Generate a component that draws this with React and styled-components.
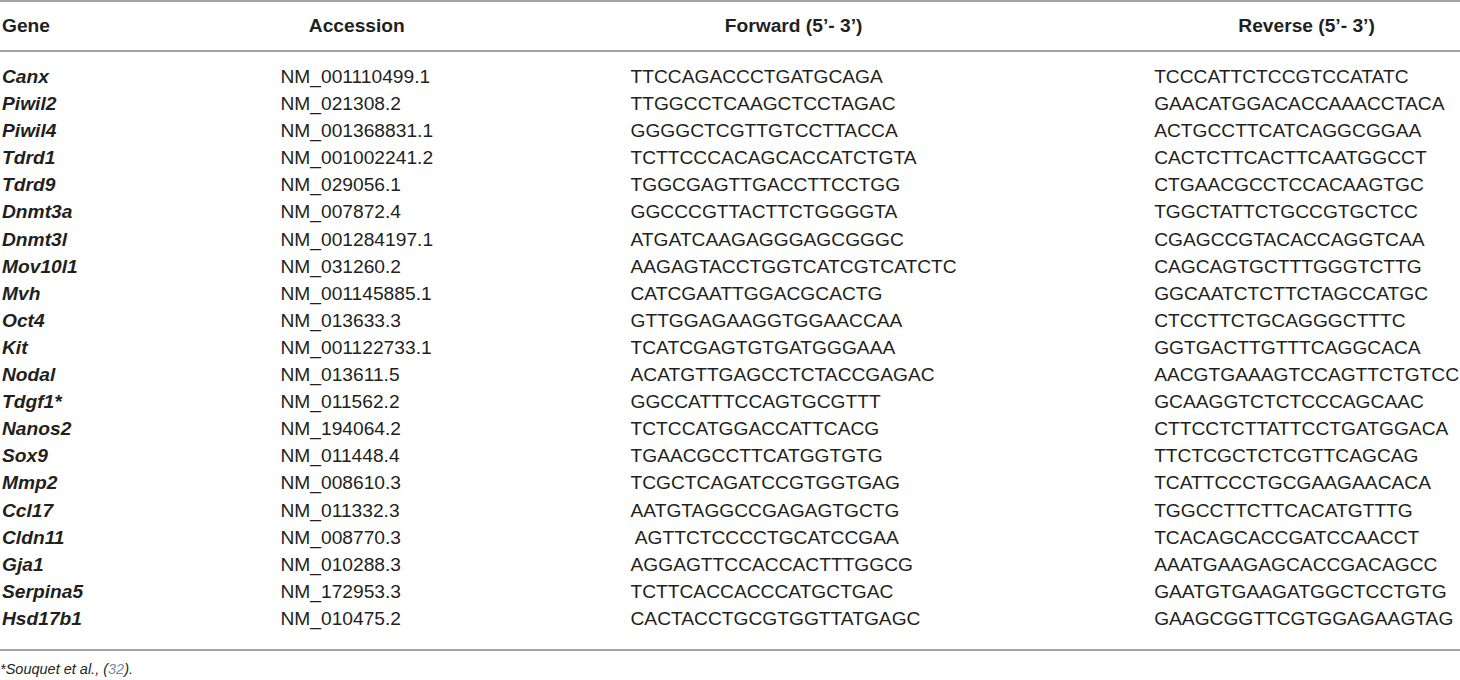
import React from "react";
import styled, { createGlobalStyle } from "styled-components";

const rows = [
  ["Canx", "NM_001110499.1", "TTCCAGACCCTGATGCAGA", "TCCCATTCTCCGTCCATATC"],
  ["Piwil2", "NM_021308.2", "TTGGCCTCAAGCTCCTAGAC", "GAACATGGACACCAAACCTACA"],
  ["Piwil4", "NM_001368831.1", "GGGGCTCGTTGTCCTTACCA", "ACTGCCTTCATCAGGCGGAA"],
  ["Tdrd1", "NM_001002241.2", "TCTTCCCACAGCACCATCTGTA", "CACTCTTCACTTCAATGGCCT"],
  ["Tdrd9", "NM_029056.1", "TGGCGAGTTGACCTTCCTGG", "CTGAACGCCTCCACAAGTGC"],
  ["Dnmt3a", "NM_007872.4", "GGCCCGTTACTTCTGGGGTA", "TGGCTATTCTGCCGTGCTCC"],
  ["Dnmt3l", "NM_001284197.1", "ATGATCAAGAGGGAGCGGGC", "CGAGCCGTACACCAGGTCAA"],
  ["Mov10l1", "NM_031260.2", "AAGAGTACCTGGTCATCGTCATCTC", "CAGCAGTGCTTTGGGTCTTG"],
  ["Mvh", "NM_001145885.1", "CATCGAATTGGACGCACTG", "GGCAATCTCTTCTAGCCATGC"],
  ["Oct4", "NM_013633.3", "GTTGGAGAAGGTGGAACCAA", "CTCCTTCTGCAGGGCTTTC"],
  ["Kit", "NM_001122733.1", "TCATCGAGTGTGATGGGAAA", "GGTGACTTGTTTCAGGCACA"],
  ["Nodal", "NM_013611.5", "ACATGTTGAGCCTCTACCGAGAC", "AACGTGAAAGTCCAGTTCTGTCC"],
  ["Tdgf1*", "NM_011562.2", "GGCCATTTCCAGTGCGTTT", "GCAAGGTCTCTCCCAGCAAC"],
  ["Nanos2", "NM_194064.2", "TCTCCATGGACCATTCACG", "CTTCCTCTTATTCCTGATGGACA"],
  ["Sox9", "NM_011448.4", "TGAACGCCTTCATGGTGTG", "TTCTCGCTCTCGTTCAGCAG"],
  ["Mmp2", "NM_008610.3", "TCGCTCAGATCCGTGGTGAG", "TCATTCCCTGCGAAGAACACA"],
  ["Ccl17", "NM_011332.3", "AATGTAGGCCGAGAGTGCTG", "TGGCCTTCTTCACATGTTTG"],
  ["Cldn11", "NM_008770.3", " AGTTCTCCCCTGCATCCGAA", "TCACAGCACCGATCCAACCT"],
  ["Gja1", "NM_010288.3", "AGGAGTTCCACCACTTTGGCG", "AAATGAAGAGCACCGACAGCC"],
  ["Serpina5", "NM_172953.3", "TCTTCACCACCCATGCTGAC", "GAATGTGAAGATGGCTCCTGTG"],
  ["Hsd17b1", "NM_010475.2", "CACTACCTGCGTGGTTATGAGC", "GAAGCGGTTCGTGGAGAAGTAG"],
];

const GlobalStyle = createGlobalStyle`
  html, body {
    margin: 0;
    padding: 0;
    background: #ffffff;
  }
  body {
    font-family: "Liberation Sans", Arial, sans-serif;
    color: #231f20;
  }
`;

const Page = styled.div`
  width: 1460px;
`;

const Table = styled.div`
  display: grid;
  grid-template-columns: repeat(4, max-content);
  justify-content: space-between;
  padding-left: 2px;
  padding-right: 1px;
  border-top: 2px solid #a3a3a3;
  border-bottom: 2px solid #a3a3a3;
  font-size: 19.2px;
`;

const HeadCell = styled.div`
  height: 48px;
  line-height: 48px;
  font-weight: bold;
  text-align: ${({ $left }) => ($left ? "left" : "center")};
`;

const Rule = styled.div`
  grid-column: 1 / -1;
  height: 2px;
  margin-left: -2px;
  margin-right: -1px;
  background: #a3a3a3;
  margin-bottom: 11px;
`;

const Cell = styled.div`
  height: 27.1px;
  line-height: 27.1px;
  white-space: pre;
  font-weight: ${({ $gene }) => ($gene ? "bold" : "normal")};
  font-style: ${({ $gene }) => ($gene ? "italic" : "normal")};
`;

const Spacer = styled.div`
  grid-column: 1 / -1;
  height: 17px;
`;

const Note = styled.p`
  margin: 0;
  padding-top: 9px;
  font-size: 14.5px;
  font-style: italic;
  line-height: 18px;
`;

const Ref = styled.span`
  color: #7b8ba3;
`;

export default function App() {
  return (
    <Page>
      <GlobalStyle />
      <Table>
        <HeadCell $left>Gene</HeadCell>
        <HeadCell>Accession</HeadCell>
        <HeadCell>Forward (5’- 3’)</HeadCell>
        <HeadCell>Reverse (5’- 3’)</HeadCell>
        <Rule />
        {rows.map((r) => (
          <React.Fragment key={r[0]}>
            <Cell $gene>{r[0]}</Cell>
            <Cell>{r[1]}</Cell>
            <Cell>{r[2]}</Cell>
            <Cell>{r[3]}</Cell>
          </React.Fragment>
        ))}
        <Spacer />
      </Table>
      <Note>
        *Souquet et al., (<Ref>32</Ref>).
      </Note>
    </Page>
  );
}
